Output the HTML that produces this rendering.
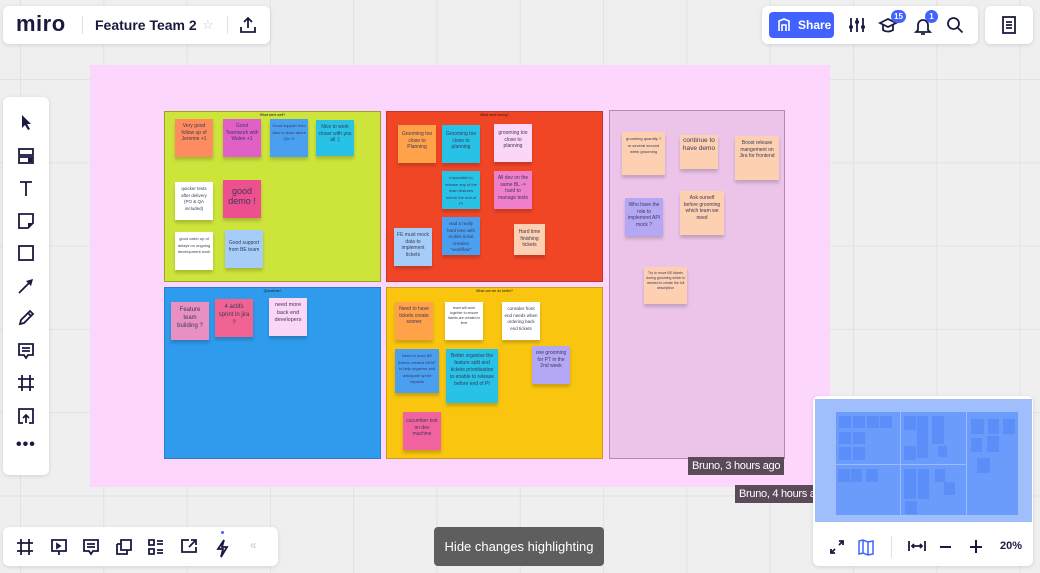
<!DOCTYPE html>
<html><head><meta charset="utf-8"><style>
*{margin:0;padding:0;box-sizing:border-box}
body{width:1040px;height:573px;overflow:hidden;position:relative;font-family:"Liberation Sans",sans-serif;
background-color:#efefef;
background-image:linear-gradient(90deg,#e2e2e2 1px,transparent 1px),linear-gradient(#e2e2e2 1px,transparent 1px);
background-size:83.3px 83.3px;background-position:20px 79px}
.a{position:absolute}
.panel{position:absolute;background:#fff;border-radius:6px;box-shadow:0 1px 4px rgba(0,0,0,.12)}
.s{position:absolute;font-size:5px;line-height:6.5px;color:#3a3a5a;text-align:center;padding:4px 2px;box-shadow:0 3px 3px rgba(0,0,0,.18);overflow:hidden}
.q{position:absolute}
.qt{position:absolute;top:1px;left:0;right:0;text-align:center;font-size:3.5px;color:#222}
svg{position:absolute}
.ic{stroke:#1a1a40;stroke-width:1.8;fill:none}
.lab{position:absolute;background:#5b4a5a;color:#fff;font-size:11px;line-height:18px;padding:0 4px;white-space:nowrap;letter-spacing:-.3px}
.m{position:absolute;background:#5b8ef9;width:9px;height:9px}
</style></head><body>

<div class="a" style="left:90px;top:65px;width:740px;height:422px;background:#fdd6fd"></div>
<div class="q" style="left:164px;top:111px;width:217px;height:171px;background:#cde43b;border:1px solid #9aa030"><div class="qt">What went well?</div></div>
<div class="q" style="left:386px;top:111px;width:217px;height:171px;background:#f14626;border:1px solid #c0382a"><div class="qt">What went wrong?</div></div>
<div class="q" style="left:164px;top:287px;width:217px;height:172px;background:#2f9bec;border:1px solid #2a80c8"><div class="qt">Questions?</div></div>
<div class="q" style="left:386px;top:287px;width:217px;height:172px;background:#f9c50f;border:1px solid #c9a010"><div class="qt">What can we do better?</div></div>
<div class="q" style="left:609px;top:110px;width:176px;height:349px;background:#ecc4ea;border:1px solid #b08db0"></div>

<div class="s" style="left:175px;top:119px;width:38px;height:38px;background:#ff8c5e">Very good follow up of Jeremie +1</div>
<div class="s" style="left:223px;top:119px;width:38px;height:38px;background:#e160c8">Good Teamwork with Walen +1</div>
<div class="s" style="left:270px;top:119px;width:38px;height:38px;background:#4b9ff0;font-size:4px">Good support from Alex to team about QA +1</div>
<div class="s" style="left:316px;top:120px;width:38px;height:36px;background:#27c2e5">Nice to work closer with you all :)</div>
<div class="s" style="left:175px;top:182px;width:38px;height:38px;background:#fff;font-size:4.5px">quicker tests after delivery (PO &amp; QA included)</div>
<div class="s" style="left:223px;top:180px;width:38px;height:38px;background:#ee4f8e;font-size:9px;line-height:10px;padding-top:6px">good demo !</div>
<div class="s" style="left:175px;top:232px;width:38px;height:38px;background:#fff;font-size:4px">good catch up of delays on ongoing development work</div>
<div class="s" style="left:225px;top:230px;width:38px;height:38px;background:#a6cdf7;padding-top:10px">Good support from BE team</div>
<div class="s" style="left:398px;top:125px;width:38px;height:38px;background:#ffa24a;padding-top:6px">Grooming too close to Planning</div>
<div class="s" style="left:442px;top:125px;width:38px;height:38px;background:#27c2e5;padding-top:6px">Grooming too close to planning</div>
<div class="s" style="left:494px;top:124px;width:38px;height:38px;background:#fbd6f6;padding-top:6px">grooming too close to planning</div>
<div class="s" style="left:442px;top:171px;width:38px;height:38px;background:#27c2e5;font-size:4px">Impossible to release any of the main features before the end of PI</div>
<div class="s" style="left:494px;top:171px;width:38px;height:38px;background:#ef7ecb">All dev on the same BL -&gt; hard to manage tests</div>
<div class="s" style="left:442px;top:217px;width:38px;height:38px;background:#4b9ff0;font-size:4.5px">Had a really hard time with mobile ticket creation "workflow"</div>
<div class="s" style="left:394px;top:228px;width:38px;height:38px;background:#a6cdf7">FE must mock data to implement tickets</div>
<div class="s" style="left:514px;top:224px;width:31px;height:31px;background:#fdd0b1;padding-top:5px">Hard time finishing tickets</div>
<div class="s" style="left:171px;top:302px;width:38px;height:38px;background:#e890c4;font-size:6px;line-height:8px">Feature team building ?</div>
<div class="s" style="left:215px;top:299px;width:38px;height:38px;background:#f06393;font-size:6px;line-height:8px">4 actifs sprint in jira ?</div>
<div class="s" style="left:269px;top:298px;width:38px;height:38px;background:#fbd6f6;font-size:5.5px;line-height:7.5px">need more back end developers</div>
<div class="s" style="left:395px;top:302px;width:38px;height:38px;background:#ffa24a">Need to have tickets create sooner</div>
<div class="s" style="left:445px;top:302px;width:38px;height:38px;background:#fff;font-size:3.5px;line-height:5px">team will work together to ensure tickets are created in time</div>
<div class="s" style="left:502px;top:302px;width:38px;height:38px;background:#fff;font-size:4.5px">consider front end needs when ordering back end tickets</div>
<div class="s" style="left:395px;top:349px;width:44px;height:44px;background:#4b9ff0;font-size:4px">Need to have BE tickets created ASAP to help organise and anticipate sprint impacts</div>
<div class="s" style="left:446px;top:349px;width:52px;height:54px;background:#27c2e5;line-height:7px">Better organise the feature split and tickets prioritisation to enable to release before end of PI</div>
<div class="s" style="left:532px;top:346px;width:38px;height:38px;background:#b4a8f5">one grooming for PT in the 2nd week</div>
<div class="s" style="left:403px;top:412px;width:38px;height:38px;background:#f0639e;padding-top:6px">cucumber test on dev machine</div>
<div class="s" style="left:622px;top:132px;width:43px;height:43px;background:#fdd0b1;font-size:4px">grooming quantity ? or several second week grooming</div>
<div class="s" style="left:680px;top:135px;width:38px;height:34px;background:#fdd0b1;font-size:6.5px;line-height:8px;padding-top:2px">continue to have demo</div>
<div class="s" style="left:735px;top:136px;width:44px;height:44px;background:#fdd0b1">Boost release mangement on Jira for frontend</div>
<div class="s" style="left:625px;top:198px;width:38px;height:38px;background:#b4a8f5">Who have the role to implement API mock ?</div>
<div class="s" style="left:680px;top:191px;width:44px;height:44px;background:#fdd0b1">Ask ourself before grooming which team we need</div>
<div class="s" style="left:644px;top:267px;width:43px;height:37px;background:#fdd0b1;font-size:3.5px;line-height:5px">Try to move BE tickets during grooming which is needed to create the full description</div>

<div class="lab" style="left:688px;top:457px">Bruno, 3 hours ago</div>
<div class="lab" style="left:735px;top:485px;width:80px;overflow:hidden">Bruno, 4 hours ago</div>

<div class="panel" style="left:3px;top:6px;width:267px;height:38px">
<div class="a" style="left:13px;top:5px;font-size:22px;font-weight:bold;color:#1a1a40;letter-spacing:.5px">miro</div>
<div class="a" style="left:79px;top:10px;width:1px;height:18px;background:#e0e0e0"></div>
<div class="a" style="left:92px;top:11px;font-size:14px;font-weight:bold;color:#1a1a40">Feature Team 2</div>
<div class="a" style="left:199px;top:11px;font-size:13px;color:#c8c8c8">☆</div>
<div class="a" style="left:224px;top:10px;width:1px;height:18px;background:#e0e0e0"></div>
<svg style="left:236px;top:10px" width="18" height="18" viewBox="0 0 18 18"><path class="ic" d="M9 12V2M5 6l4-4 4 4M2 11v5h14v-5"/></svg>
</div>

<div class="panel" style="left:762px;top:6px;width:216px;height:38px">
<div class="a" style="left:7px;top:6px;width:65px;height:26px;background:#4262ff;border-radius:4px;color:#fff;font-size:12px;font-weight:bold;line-height:26px;padding-left:29px">Share</div>
<svg style="left:15px;top:12px" width="14" height="14" viewBox="0 0 14 14"><path d="M2 13V3l5-2 5 2v10M5 13V7h4v6" stroke="#fff" stroke-width="1.6" fill="none"/></svg>
<svg style="left:86px;top:10px" width="18" height="18" viewBox="0 0 18 18"><path class="ic" d="M3 2v14M9 2v14M15 2v14"/><circle cx="3" cy="11" r="2" fill="#1a1a40"/><circle cx="9" cy="6" r="2" fill="#1a1a40"/><circle cx="15" cy="11" r="2" fill="#1a1a40"/></svg>
<svg style="left:116px;top:10px" width="20" height="20" viewBox="0 0 20 20"><path class="ic" d="M2 7l8-4 8 4-8 4zM5 9v5c3 2 7 2 10 0V9"/></svg>
<div class="a" style="left:129px;top:4px;width:15px;height:13px;border-radius:7px;background:#4262ff;color:#fff;font-size:8px;font-weight:bold;text-align:center;line-height:13px">15</div>
<svg style="left:152px;top:10px" width="18" height="20" viewBox="0 0 18 20"><path class="ic" d="M4 14V9a5 5 0 0110 0v5l2 2H2zM7 18h4"/></svg>
<div class="a" style="left:163px;top:4px;width:13px;height:13px;border-radius:7px;background:#4262ff;color:#fff;font-size:8px;font-weight:bold;text-align:center;line-height:13px">1</div>
<svg style="left:184px;top:10px" width="18" height="18" viewBox="0 0 18 18"><circle class="ic" cx="7.5" cy="7.5" r="5.5"/><path class="ic" d="M11.5 11.5l5 5"/></svg>
</div>
<div class="panel" style="left:985px;top:6px;width:48px;height:38px">
<svg style="left:16px;top:10px" width="16" height="18" viewBox="0 0 16 18"><rect class="ic" x="2" y="1" width="12" height="16"/><path class="ic" d="M5 6h6M5 9h6M5 12h6" stroke-width="1.4"/></svg>
</div>

<div class="panel" style="left:3px;top:97px;width:46px;height:378px">
<svg style="left:14px;top:16px" width="18" height="18" viewBox="0 0 18 18"><path d="M5 2v13l3-3 3 5 2-1-3-5h4z" fill="#1a1a40"/></svg>
<svg style="left:14px;top:50px" width="18" height="18" viewBox="0 0 18 18"><rect class="ic" x="2" y="2" width="14" height="6"/><rect class="ic" x="2" y="10" width="14" height="6"/><rect x="11" y="11" width="4" height="4" fill="#1a1a40"/></svg>
<svg style="left:14px;top:82px" width="18" height="18" viewBox="0 0 18 18"><path class="ic" d="M3 3h12M9 3v14" stroke-width="2"/></svg>
<svg style="left:14px;top:115px" width="18" height="18" viewBox="0 0 18 18"><path class="ic" d="M2 2h14v9l-5 5H2z"/><path d="M16 11h-5v5z" fill="#1a1a40"/></svg>
<svg style="left:14px;top:147px" width="18" height="18" viewBox="0 0 18 18"><rect class="ic" x="2" y="2" width="14" height="14"/></svg>
<svg style="left:14px;top:180px" width="18" height="18" viewBox="0 0 18 18"><path class="ic" d="M2 16L15 3"/><path d="M16 2l-7 2 5 5z" fill="#1a1a40"/></svg>
<svg style="left:14px;top:212px" width="18" height="18" viewBox="0 0 18 18"><path class="ic" d="M3 15l1-4 9-9 3 3-9 9zM11 4l3 3"/></svg>
<svg style="left:14px;top:245px" width="18" height="18" viewBox="0 0 18 18"><path class="ic" d="M2 2h14v11H11l-2 3-2-3H2zM5 6h8M5 9h8"/></svg>
<svg style="left:14px;top:277px" width="18" height="18" viewBox="0 0 18 18"><path class="ic" d="M5 1v16M13 1v16M1 5h16M1 13h16"/></svg>
<svg style="left:14px;top:310px" width="18" height="18" viewBox="0 0 18 18"><path class="ic" d="M6 16H2V2h14v14h-4M9 16V8M6 11l3-3 3 3"/></svg>
<div class="a" style="left:13px;top:339px;font-size:16px;font-weight:bold;color:#1a1a40;letter-spacing:1px">•••</div>
</div>

<div class="panel" style="left:3px;top:527px;width:275px;height:39px">
<svg style="left:13px;top:11px" width="18" height="18" viewBox="0 0 18 18"><path class="ic" d="M5 1v16M13 1v16M1 5h16M1 13h16"/></svg>
<svg style="left:47px;top:11px" width="18" height="18" viewBox="0 0 18 18"><path class="ic" d="M2 2h14v11H2zM9 13v4M7 6v4l3-2z"/></svg>
<svg style="left:79px;top:11px" width="18" height="18" viewBox="0 0 18 18"><path class="ic" d="M2 2h14v11H11l-2 3-2-3H2zM5 6h8M5 9h8"/></svg>
<svg style="left:112px;top:11px" width="18" height="18" viewBox="0 0 18 18"><path class="ic" d="M6 2h10v10H6zM2 6h4M2 6v10h10v-4"/></svg>
<svg style="left:144px;top:11px" width="18" height="18" viewBox="0 0 18 18"><path class="ic" d="M2 2h5v5H2zM2 11h5v5H2zM10 3h6M10 6h6M10 12h6M10 15h6"/></svg>
<svg style="left:177px;top:11px" width="18" height="18" viewBox="0 0 18 18"><path class="ic" d="M9 2H2v12h14V9M11 2h5v5M16 2l-7 7"/></svg>
<svg style="left:210px;top:11px" width="18" height="20" viewBox="0 0 18 20"><path class="ic" d="M11 2L5 11h5l-2 8 6-10H9z"/></svg>
<div class="a" style="left:218px;top:4px;width:3px;height:3px;border-radius:2px;background:#4262ff"></div>
<div class="a" style="left:247px;top:11px;font-size:12px;color:#c8c8c8">«</div>
</div>

<div class="a" style="left:434px;top:527px;width:170px;height:39px;background:#5e5e5e;border-radius:4px;color:#fff;font-size:13px;text-align:center;line-height:39px">Hide changes highlighting</div>

<div class="panel" style="left:813px;top:396px;width:220px;height:170px">
<div class="a" style="left:2px;top:3px;width:217px;height:123px;background:#a0bdfc"></div>
<div class="a" style="left:23px;top:16px;width:182px;height:103px;background:#6b9cfb"></div>
<div class="a" style="left:87px;top:16px;width:1px;height:103px;background:#9dbcfd"></div>
<div class="a" style="left:153px;top:16px;width:1px;height:103px;background:#9dbcfd"></div>
<div class="a" style="left:23px;top:68px;width:130px;height:1px;background:#9dbcfd"></div>
<div class="m" style="left:26px;top:20px;width:12px;height:12px"></div><div class="m" style="left:40px;top:20px;width:12px;height:12px"></div><div class="m" style="left:54px;top:20px;width:12px;height:12px"></div><div class="m" style="left:67px;top:20px;width:12px;height:12px"></div>
<div class="m" style="left:26px;top:36px;width:12px;height:12px"></div><div class="m" style="left:40px;top:36px;width:12px;height:12px"></div>
<div class="m" style="left:26px;top:51px;width:12px;height:13px"></div><div class="m" style="left:40px;top:51px;width:12px;height:13px"></div>
<div class="m" style="left:91px;top:20px;width:12px;height:14px"></div><div class="m" style="left:104px;top:20px;width:11px;height:42px"></div><div class="m" style="left:119px;top:20px;width:12px;height:28px"></div>
<div class="m" style="left:91px;top:50px;width:12px;height:14px"></div><div class="m" style="left:125px;top:50px;width:9px;height:11px"></div>
<div class="m" style="left:158px;top:23px;width:13px;height:15px"></div><div class="m" style="left:175px;top:23px;width:11px;height:15px"></div><div class="m" style="left:190px;top:23px;width:12px;height:15px"></div>
<div class="m" style="left:158px;top:42px;width:11px;height:14px"></div><div class="m" style="left:174px;top:40px;width:12px;height:16px"></div>
<div class="m" style="left:164px;top:62px;width:13px;height:15px"></div>
<div class="m" style="left:25px;top:73px;width:12px;height:13px"></div><div class="m" style="left:38px;top:73px;width:11px;height:13px"></div><div class="m" style="left:53px;top:73px;width:12px;height:13px"></div>
<div class="m" style="left:91px;top:73px;width:12px;height:30px"></div><div class="m" style="left:105px;top:73px;width:11px;height:30px"></div><div class="m" style="left:122px;top:73px;width:10px;height:13px"></div><div class="m" style="left:131px;top:86px;width:11px;height:13px"></div>
<div class="m" style="left:92px;top:105px;width:12px;height:13px"></div>
<svg style="left:16px;top:143px" width="16" height="16" viewBox="0 0 16 16"><path class="ic" d="M10 2h4v4M14 2l-4 4M6 14H2v-4M2 14l4-4" stroke-width="1.6"/></svg>
<svg style="left:44px;top:142px" width="18" height="18" viewBox="0 0 18 18"><path d="M2 3l4-1 5 2 5-1v13l-5 1-5-2-4 1zM6 2v13M11 4v13" stroke="#4262ff" stroke-width="1.5" fill="none"/></svg>
<div class="a" style="left:78px;top:140px;width:1px;height:22px;background:#e0e0e0"></div>
<svg style="left:94px;top:143px" width="20" height="14" viewBox="0 0 20 14"><path class="ic" d="M2 2v10M18 2v10M5 7h10M7 5l-2 2 2 2M13 5l2 2-2 2" stroke-width="1.5"/></svg>
<div class="a" style="left:127px;top:150px;width:11px;height:1.8px;background:#1a1a40"></div>
<div class="a" style="left:157px;top:150px;width:12px;height:1.8px;background:#1a1a40"></div>
<div class="a" style="left:162px;top:144px;width:1.8px;height:13px;background:#1a1a40"></div>
<div class="a" style="left:187px;top:144px;font-size:11px;font-weight:bold;color:#1a1a40">20%</div>
</div>
</body></html>
